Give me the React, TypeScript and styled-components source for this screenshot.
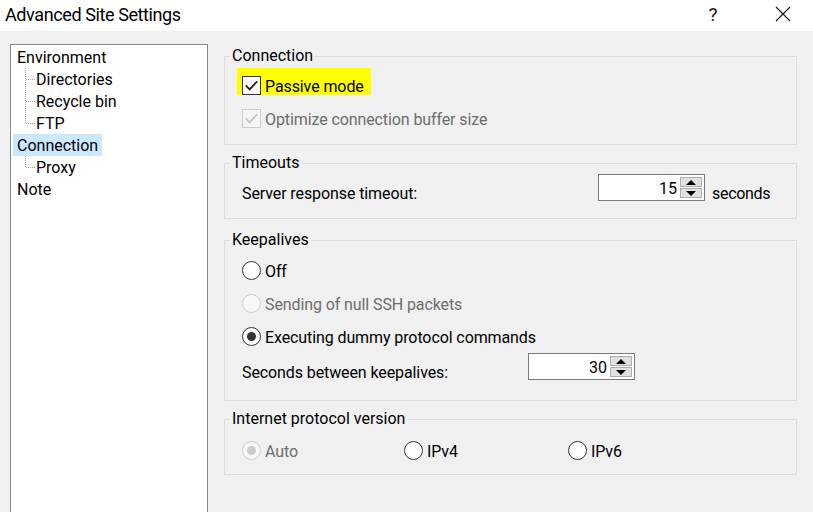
import styled, { createGlobalStyle } from "styled-components";

const GlobalStyle = createGlobalStyle`
    html, body {
        margin: 0;
        padding: 0;
    }
    body {
        font-family: Roboto, "Liberation Sans", sans-serif;
        font-size: 16px;
        color: #000;
        background: #f0f0f0;
    }
`;

const treeItems = [
    { label: "Environment" },
    { label: "Directories", child: true },
    { label: "Recycle bin", child: true },
    { label: "FTP", child: true, last: true },
    { label: "Connection", selected: true },
    { label: "Proxy", child: true, last: true },
    { label: "Note" },
];

function CheckIcon({ disabled }: { disabled?: boolean }) {
    return (
        <svg width="17" height="17" viewBox="0 0 17 17">
            <path
                d="M2.8 8.4 L6.6 12.4 L14.2 4.4"
                fill="none"
                stroke={disabled ? "#c4c4c4" : "#202020"}
                strokeWidth="1.8"
            />
        </svg>
    );
}

function Spinner({ value }: { value: number }) {
    return (
        <SpinBox>
            <SpinValue>{value}</SpinValue>
            <SpinButtons>
                <SpinButton>
                    <Arrow $up />
                </SpinButton>
                <SpinButton>
                    <Arrow />
                </SpinButton>
            </SpinButtons>
        </SpinBox>
    );
}

function App() {
    return (
        <Window>
            <GlobalStyle />
            <TitleBar>
                <Title>Advanced Site Settings</Title>
                <TitleButton>?</TitleButton>
                <TitleButton $wide>
                    <svg width="16" height="16" viewBox="0 0 16 16">
                        <path d="M1 1 L15 15 M15 1 L1 15" stroke="#111" strokeWidth="1.1" fill="none" />
                    </svg>
                </TitleButton>
            </TitleBar>

            <Body>
                <Tree>
                    {treeItems.map((item) => (
                        <TreeRow
                            key={item.label}
                            $child={item.child}
                            $last={item.last}
                            $selected={item.selected}
                        >
                            {item.label}
                        </TreeRow>
                    ))}
                </Tree>

                <Settings>
                    <Group $mt={0}>
                        <Legend>Connection</Legend>
                        <GroupBody $pt={2} $pb={13} $gap={10}>
                            <OptionRow $highlight>
                                <CheckBox>
                                    <CheckIcon />
                                </CheckBox>
                                <Label>Passive mode</Label>
                            </OptionRow>
                            <OptionRow>
                                <CheckBox $disabled>
                                    <CheckIcon disabled />
                                </CheckBox>
                                <Label $disabled>Optimize connection buffer size</Label>
                            </OptionRow>
                        </GroupBody>
                    </Group>

                    <Group $mt={8}>
                        <Legend>Timeouts</Legend>
                        <GroupBody $pt={1} $pb={17} $gap={0}>
                            <SpinRow>
                                <SpinLabel $width={356}>Server response timeout:</SpinLabel>
                                <Spinner value={15} />
                                <Unit>seconds</Unit>
                            </SpinRow>
                        </GroupBody>
                    </Group>

                    <Group $mt={11}>
                        <Legend>Keepalives</Legend>
                        <GroupBody $pt={7} $pb={20} $gap={7}>
                            <OptionRow>
                                <Radio />
                                <Label>Off</Label>
                            </OptionRow>
                            <OptionRow>
                                <Radio $disabled />
                                <Label $disabled>Sending of null SSH packets</Label>
                            </OptionRow>
                            <OptionRow>
                                <Radio $checked />
                                <Label>Executing dummy protocol commands</Label>
                            </OptionRow>
                            <SpinRow $mt={-3}>
                                <SpinLabel $width={286}>Seconds between keepalives:</SpinLabel>
                                <Spinner value={30} />
                            </SpinRow>
                        </GroupBody>
                    </Group>

                    <Group $mt={8}>
                        <Legend>Internet protocol version</Legend>
                        <GroupBody $pt={8} $pb={11} $gap={0}>
                            <ProtocolRow>
                                <OptionRow>
                                    <Radio $checked $disabled />
                                    <Label $disabled>Auto</Label>
                                </OptionRow>
                                <OptionRow>
                                    <Radio />
                                    <Label>IPv4</Label>
                                </OptionRow>
                                <OptionRow>
                                    <Radio />
                                    <Label>IPv6</Label>
                                </OptionRow>
                            </ProtocolRow>
                        </GroupBody>
                    </Group>
                </Settings>
            </Body>
        </Window>
    );
}

const Window = styled.div`
    width: 813px;
    height: 512px;
    overflow: hidden;
    background: #f0f0f0;
    display: flex;
    flex-direction: column;
`;

const TitleBar = styled.div`
    height: 31px;
    flex-shrink: 0;
    background: #fff;
    display: flex;
    align-items: center;
    padding-left: 5px;
    gap: 10px;
`;

const Title = styled.div`
    flex: 1;
    font-size: 18px;
    letter-spacing: -0.4px;
    padding-bottom: 2px;
`;

const TitleButton = styled.div<{ $wide?: boolean }>`
    width: 60px;
    height: 31px;
    display: flex;
    align-items: center;
    justify-content: center;
    font-size: 19px;
    color: #111;
    padding-bottom: ${(p) => (p.$wide ? 4 : 2)}px;
    box-sizing: border-box;
`;

const Body = styled.div`
    display: flex;
    gap: 16px;
    padding: 13px 16px 0 10px;
`;

const Tree = styled.div`
    width: 198px;
    height: 480px;
    flex-shrink: 0;
    box-sizing: border-box;
    background: #fff;
    border: 1px solid #828790;
    border-bottom: none;
    padding: 1px 0 0 2px;
`;

const dotsV = "repeating-linear-gradient(to bottom, #a0a0a0 0 1px, transparent 1px 2px)";
const dotsH = "repeating-linear-gradient(to right, #a0a0a0 0 1px, transparent 1px 2px)";

const TreeRow = styled.div<{ $child?: boolean; $last?: boolean; $selected?: boolean }>`
    position: relative;
    width: fit-content;
    height: 22px;
    line-height: 24px;
    padding: 0 4px 0 ${(p) => (p.$child ? 23 : 4)}px;
    background: ${(p) => (p.$selected ? "#cce8ff" : "transparent")};

    &::before {
        content: "";
        display: ${(p) => (p.$child ? "block" : "none")};
        position: absolute;
        left: 12px;
        top: 0;
        width: 1px;
        height: ${(p) => (p.$last ? 11 : 22)}px;
        background: ${dotsV};
    }

    &::after {
        content: "";
        display: ${(p) => (p.$child ? "block" : "none")};
        position: absolute;
        left: 13px;
        top: 11px;
        width: 9px;
        height: 1px;
        background: ${dotsH};
    }
`;

const Settings = styled.div`
    width: 574px;
    display: flex;
    flex-direction: column;
    padding-top: 2px;
`;

const Group = styled.fieldset<{ $mt: number }>`
    margin: ${(p) => p.$mt}px 0 0;
    padding: 0;
    min-width: 0;
    border: 1px solid #dcdcdc;
`;

const Legend = styled.legend`
    margin-left: 5px;
    padding: 0 2px;
    line-height: 20px;
    font-size: 16px;
`;

const GroupBody = styled.div<{ $pt: number; $pb: number; $gap: number }>`
    display: flex;
    flex-direction: column;
    gap: ${(p) => p.$gap}px;
    padding: ${(p) => p.$pt}px 12px ${(p) => p.$pb}px 12px;
`;

const OptionRow = styled.div<{ $highlight?: boolean }>`
    display: flex;
    align-items: center;
    gap: 4px;
    width: fit-content;
    height: ${(p) => (p.$highlight ? 27 : 26)}px;
    box-sizing: border-box;
    padding: ${(p) => (p.$highlight ? 8 : 0)}px 7px 0 5px;
    background: ${(p) => (p.$highlight ? "#ffff00" : "transparent")};
`;

const CheckBox = styled.span<{ $disabled?: boolean }>`
    width: 19px;
    height: 19px;
    box-sizing: border-box;
    display: flex;
    align-items: center;
    justify-content: center;
    border: 1px solid ${(p) => (p.$disabled ? "#cccccc" : "#333333")};
    background: ${(p) => (p.$disabled ? "#f4f4f4" : "#ffffff")};
    flex-shrink: 0;
`;

const Radio = styled.span<{ $checked?: boolean; $disabled?: boolean }>`
    width: 19px;
    height: 19px;
    box-sizing: border-box;
    border-radius: 50%;
    border: 1px solid ${(p) => (p.$disabled ? "#cccccc" : "#333333")};
    background: ${(p) => (p.$disabled ? "#f7f7f7" : "#ffffff")};
    display: flex;
    align-items: center;
    justify-content: center;
    flex-shrink: 0;

    &::after {
        content: "";
        display: ${(p) => (p.$checked ? "block" : "none")};
        width: 9px;
        height: 9px;
        border-radius: 50%;
        background: ${(p) => (p.$disabled ? "#cccccc" : "#333333")};
    }
`;

const Label = styled.span<{ $disabled?: boolean }>`
    color: ${(p) => (p.$disabled ? "#6d6d6d" : "#000")};
    letter-spacing: -0.1px;
    line-height: 20px;
    padding-top: 3px;
    white-space: nowrap;
`;

const SpinRow = styled.div<{ $mt?: number }>`
    display: flex;
    align-items: center;
    height: 27px;
    margin-top: ${(p) => p.$mt ?? 0}px;
    padding-left: 5px;
`;

const SpinLabel = styled.span<{ $width: number }>`
    width: ${(p) => p.$width}px;
    flex-shrink: 0;
    padding-top: 12px;
    line-height: 20px;
    letter-spacing: -0.1px;
`;

const Unit = styled.span`
    margin-left: 7px;
    padding-top: 12px;
    line-height: 20px;
    letter-spacing: -0.3px;
`;

const SpinBox = styled.div`
    width: 107px;
    height: 27px;
    box-sizing: border-box;
    border: 1px solid #7a7a7a;
    background: #fff;
    display: flex;
    align-items: center;
    justify-content: flex-end;
    padding-right: 2px;
    flex-shrink: 0;
`;

const SpinValue = styled.span`
    margin-right: 3px;
    padding-top: 1px;
`;

const SpinButtons = styled.div`
    display: flex;
    flex-direction: column;
    gap: 1px;
`;

const SpinButton = styled.div`
    width: 22px;
    height: 10px;
    box-sizing: border-box;
    border: 1px solid #adadad;
    background: #e1e1e1;
    display: flex;
    align-items: center;
    justify-content: center;
`;

const Arrow = styled.span<{ $up?: boolean }>`
    width: 0;
    height: 0;
    border-left: 5px solid transparent;
    border-right: 5px solid transparent;
    ${(p) => (p.$up ? "border-bottom: 5px solid #000;" : "border-top: 5px solid #000;")}
`;

const ProtocolRow = styled.div`
    display: grid;
    grid-template-columns: 162px 164px auto;
`;

export default App;
